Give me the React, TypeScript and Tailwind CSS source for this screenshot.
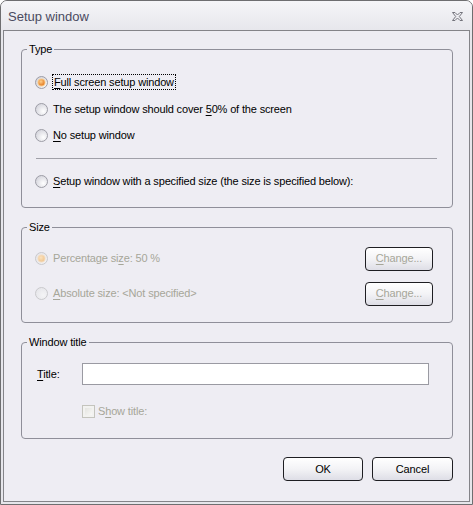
import React from 'react'

const font = { fontFamily: '"Liberation Sans", Arial, sans-serif' }

function U({ children }: { children: React.ReactNode }) {
  return <span className="underline underline-offset-[2px]">{children}</span>
}

function Radio({ checked = false, disabled = false }: { checked?: boolean; disabled?: boolean }) {
  const id = `g${checked ? 1 : 0}${disabled ? 1 : 0}`
  return (
    <svg width="13" height="13" viewBox="0 0 13 13" className="shrink-0">
      <defs>
        <radialGradient id={`${id}bg`} cx="0.65" cy="0.65" r="0.7">
          <stop offset="0" stopColor={disabled ? '#f4f4f6' : '#ffffff'} />
          <stop offset="1" stopColor={disabled ? '#e6e6ea' : '#d4d4dc'} />
        </radialGradient>
        <radialGradient id={`${id}dot`} cx="0.4" cy="0.35" r="0.7">
          <stop offset="0" stopColor={disabled ? '#fbe2bd' : '#ffd08a'} />
          <stop offset="1" stopColor={disabled ? '#efc590' : '#e2771f'} />
        </radialGradient>
      </defs>
      <circle cx="6.5" cy="6.5" r="6" fill={`url(#${id}bg)`} stroke={disabled ? '#c9c9cc' : '#9d9da6'} />
      {checked && (
        <>
          <circle cx="6.5" cy="6.5" r="4" fill={disabled ? '#f3dcc0' : '#f7c98a'} />
          <circle cx="6.5" cy="6.5" r="3" fill={`url(#${id}dot)`} />
        </>
      )}
    </svg>
  )
}

function Group({ title, className, inner, children }: { title: string; className: string; inner: string; children: React.ReactNode }) {
  return (
    <fieldset className={`border border-[#8f8f99] rounded-[4px] ${className}`}>
      <legend className="ml-[5px] px-[2px] leading-[14px] text-black">{title}</legend>
      <div className={inner}>{children}</div>
    </fieldset>
  )
}

function Btn({ children, disabled = false, className = '' }: { children: React.ReactNode; disabled?: boolean; className?: string }) {
  return (
    <button
      className={`h-[24px] border border-[#1e1e22] rounded-[4px] bg-gradient-to-b from-[#ffffff] via-[#f3f3f6] to-[#dedee6] leading-none ${
        disabled ? 'text-[#a6a699]' : 'text-black'
      } ${className}`}
    >
      {children}
    </button>
  )
}

export default function App() {
  return (
    <div className="w-[473px] h-[505px] text-[11px] tracking-[-0.15px] text-black bg-white" style={font}>
      <div className="w-full h-full border border-[#6e6e70] rounded-t-[7px] bg-[#e6e6eb] flex flex-col">
        {/* Title bar */}
        <div className="h-[29px] shrink-0 rounded-t-[6px] bg-gradient-to-b from-[#f5f5f8] to-[#e7e7ec] flex items-center justify-between pl-[7px] pr-[9px]">
          <span className="text-[13px] tracking-normal text-[#4a4a60] mt-[2px]">Setup window</span>
          <svg width="11" height="9" viewBox="0 0 11 9" className="mt-[2px]">
            <path
              d="M0.5 0.5 H3 L5.5 3 L8 0.5 H10.5 L7.3 4.5 L10.5 8.5 H8 L5.5 6 L3 8.5 H0.5 L3.7 4.5 Z"
              fill="none"
              stroke="#74747c"
              strokeWidth="1"
            />
          </svg>
        </div>

        {/* Client area */}
        <div className="flex-1 mx-[2px] mb-[2px] border border-[#848489] bg-[#eeedf3] flex flex-col">
          <Group title="Type" className="mt-[11px] ml-[17px] mr-[16px]" inner="pl-[13px] pr-[15px] pb-[18px]">
            <div className="mt-[18px] h-[16px] flex items-center gap-[4px]">
              <Radio checked />
              <span className="border border-dotted border-black px-[1px] leading-[14px]">
                <U>F</U>ull screen setup window
              </span>
            </div>
            <div className="mt-[11px] h-[16px] flex items-center gap-[5px]">
              <Radio />
              <span>
                The setup window should cover <U>5</U>0% of the screen
              </span>
            </div>
            <div className="mt-[10px] h-[16px] flex items-center gap-[5px]">
              <Radio />
              <span>
                <U>N</U>o setup window
              </span>
            </div>
            <div className="mt-[15px] ml-[1px] h-px bg-[#a0a0a8]" />
            <div className="mt-[14px] h-[16px] flex items-center gap-[5px]">
              <Radio />
              <span>
                <U>S</U>etup window with a specified size (the size is specified below):
              </span>
            </div>
          </Group>

          <Group title="Size" className="mt-[12px] ml-[17px] mr-[16px]" inner="pl-[13px] pr-[19px] pb-[17px]">
            <div className="mt-[13px] h-[23px] flex items-center">
              <Radio checked disabled />
              <span className="ml-[5px] text-[#a6a699]">
                Percentage si<U>z</U>e: 50 %
              </span>
              <Btn disabled className="ml-auto w-[68px] h-[23px]">
                <U>C</U>hange...
              </Btn>
            </div>
            <div className="mt-[12px] h-[23px] flex items-center">
              <Radio disabled />
              <span className="ml-[5px] text-[#a6a699]">
                <U>A</U>bsolute size: &lt;Not specified&gt;
              </span>
              <Btn disabled className="ml-auto w-[68px] h-[23px]">
                <U>C</U>hange...
              </Btn>
            </div>
          </Group>

          <Group title="Window title" className="mt-[12px] ml-[17px] mr-[16px]" inner="pl-[15px] pr-[23px] pb-[19px]">
            <div className="mt-[14px] h-[22px] flex items-center">
              <span className="w-[45px]">
                <U>T</U>itle:
              </span>
              <div className="flex-1 h-[22px] bg-white border border-[#9a9aa2]" />
            </div>
            <div className="mt-[18px] ml-[45px] h-[16px] flex items-center gap-[3px]">
              <div className="w-[13px] h-[13px] border border-[#c4c4bd] bg-[#f2f2f0] p-[2px]">
                <div className="w-full h-full bg-gradient-to-br from-[#e4e4e0] to-[#f8f8f6]" />
              </div>
              <span className="text-[#a6a699]">
                S<U>h</U>ow title:
              </span>
            </div>
          </Group>

          <div className="mt-[18px] mr-[16px] flex justify-end gap-[9px]">
            <Btn className="w-[80px]">OK</Btn>
            <Btn className="w-[81px]">Cancel</Btn>
          </div>
        </div>
      </div>
    </div>
  )
}
